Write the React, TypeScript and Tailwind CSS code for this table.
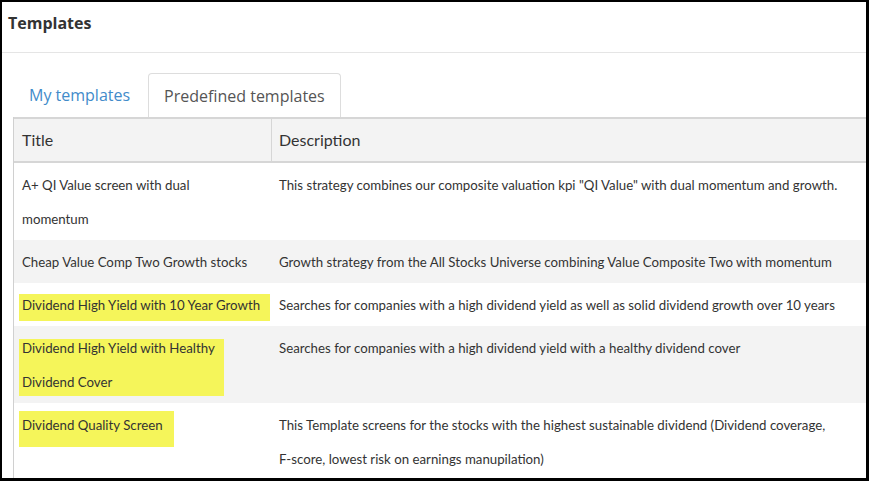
type Row = {
  title: string[];
  desc: string[];
  striped?: boolean;
  mark?: string;
};

const rows: Row[] = [
  {
    title: ["A+ QI Value screen with dual", "momentum"],
    desc: ['This strategy combines our composite valuation kpi "QI Value" with dual momentum and growth.'],
  },
  {
    title: ["Cheap Value Comp Two Growth stocks"],
    desc: ["Growth strategy from the All Stocks Universe combining Value Composite Two with momentum"],
    striped: true,
  },
  {
    title: ["Dividend High Yield with 10 Year Growth"],
    desc: ["Searches for companies with a high dividend yield as well as solid dividend growth over 10 years"],
    mark: "top-[6px] bottom-[1px] -left-[3px] -right-[10px]",
  },
  {
    title: ["Dividend High Yield with Healthy", "Dividend Cover"],
    desc: ["Searches for companies with a high dividend yield with a healthy dividend cover"],
    striped: true,
    mark: "top-[8px] bottom-[3px] -left-[3px] -right-[9px]",
  },
  {
    title: ["Dividend Quality Screen"],
    desc: [
      "This Template screens for the stocks with the highest sustainable dividend (Dividend coverage,",
      "F-score, lowest risk on earnings manupilation)",
    ],
    mark: "top-[3px] -bottom-[5px] -left-[3px] -right-[11px]",
  },
];

const Lines = ({ lines }: { lines: string[] }) => (
  <>
    {lines.map((l) => (
      <div key={l} className="whitespace-nowrap">
        {l}
      </div>
    ))}
  </>
);

export default function App() {
  return (
    <div className="w-[869px] h-[481px] overflow-hidden bg-white border-black border-t-2 border-l-2 border-r-[3px] border-b-[3px]">
      <div className="h-[51px] border-b border-[#e5e5e5] pl-[6px] pt-[10px]">
        <h4 className="font-['Open_Sans',sans-serif] font-bold text-[16px] leading-[22px] text-[#333]">
          Templates
        </h4>
      </div>

      <div className="pl-[11px] pt-[20px]">
        <ul className="flex h-[44px] font-['Open_Sans',sans-serif] text-[16px]">
          <li className="mr-[2px] px-[15px] flex items-center text-[#428bca] border border-transparent">
            My templates
          </li>
          <li className="px-[15px] flex items-center text-[#555] bg-white border border-b-0 border-[#dddddd] rounded-t-[4px]">
            Predefined templates
          </li>
        </ul>

        <div className="border-l border-[#d0d0d0] text-[#333]">
          <div className="grid grid-cols-[258px_1fr] h-[46px] bg-[#f3f3f3] border-t-2 border-b-2 border-[#d6d6d6] font-['Lato',sans-serif] text-[16px]">
            <div className="border-r border-[#d6d6d6] pl-[8px] flex items-center">Title</div>
            <div className="pl-[7px] flex items-center">Description</div>
          </div>

          {rows.map((r) => (
            <div
              key={r.title[0]}
              className={`grid grid-cols-[257px_1fr] pt-[5px] pb-[4px] font-['Lato',sans-serif] text-[13.25px] leading-[34px] ${
                r.striped ? "bg-[#f3f3f3]" : "bg-white"
              }`}
            >
              <div className="pl-[8px]">
                {r.mark ? (
                  <span className="relative isolate inline-block">
                    <span className={`absolute -z-10 bg-[#f5f55a] ${r.mark}`} />
                    <Lines lines={r.title} />
                  </span>
                ) : (
                  <Lines lines={r.title} />
                )}
              </div>
              <div className="pl-[8px] pr-[8px]">
                <Lines lines={r.desc} />
              </div>
            </div>
          ))}
        </div>
      </div>
    </div>
  );
}
